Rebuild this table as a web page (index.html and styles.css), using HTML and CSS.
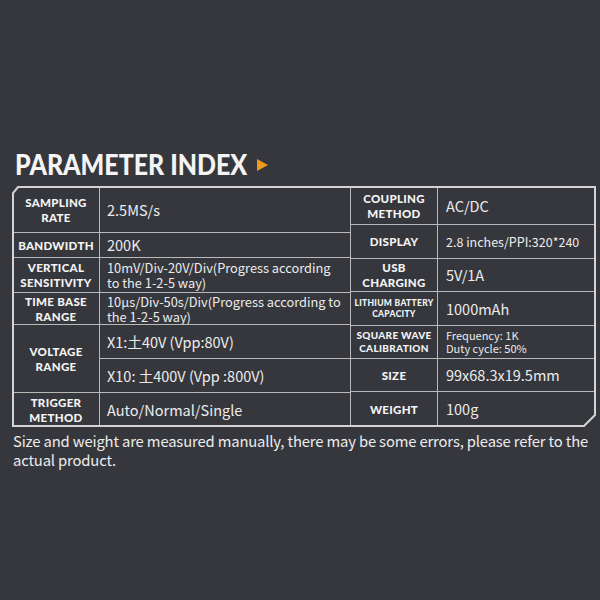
FILE: index.html
```html
<!DOCTYPE html>
<html>
<head>
<meta charset="utf-8">
<link rel="stylesheet" href="styles.css">
</head>
<body>
<div class="page">
  <div class="title-row">
    <h1 class="title">PARAMETER INDEX</h1>
    <span class="arrow"></span>
  </div>
  <div class="frame">
    <svg class="frame-line" width="584" height="241" viewBox="0 0 584 241">
      <polygon points="6,1 583,1 583,229 572,240 1,240 1,7" fill="none" stroke="#d4d4d4" stroke-width="2"/>
    </svg>
    <div class="half left">
      <div class="lbl r1">SAMPLING<br>RATE</div>
      <div class="val r1">2.5MS/s</div>
      <div class="lbl r2">BANDWIDTH</div>
      <div class="val r2">200K</div>
      <div class="lbl r3">VERTICAL<br>SENSITIVITY</div>
      <div class="val r3 sm">10mV/Div-20V/Div(Progress according<br>to the 1-2-5 way)</div>
      <div class="lbl r4">TIME BASE<br>RANGE</div>
      <div class="val r4 sm">10μs/Div-50s/Div(Progress according to<br>the 1-2-5 way)</div>
      <div class="lbl r5 span2">VOLTAGE<br>RANGE</div>
      <div class="val r5">X1:土40V (Vpp:80V)</div>
      <div class="val r6">X10: 土400V (Vpp :800V)</div>
      <div class="lbl r7">TRIGGER<br>METHOD</div>
      <div class="val r7">Auto/Normal/Single</div>
    </div>
    <div class="half right">
      <div class="lbl r1">COUPLING<br>METHOD</div>
      <div class="val r1">AC/DC</div>
      <div class="lbl r2">DISPLAY</div>
      <div class="val r2 sm2">2.8 inches/PPI:320*240</div>
      <div class="lbl r3">USB<br>CHARGING</div>
      <div class="val r3">5V/1A</div>
      <div class="lbl r4 xs">LITHIUM BATTERY<br>CAPACITY</div>
      <div class="val r4">1000mAh</div>
      <div class="lbl r5 xs2">SQUARE WAVE<br>CALIBRATION</div>
      <div class="val r5 xsv"><span>Frequency: 1K</span><span>Duty cycle: 50%</span></div>
      <div class="lbl r6">SIZE</div>
      <div class="val r6">99x68.3x19.5mm</div>
      <div class="lbl r7">WEIGHT</div>
      <div class="val r7">100g</div>
    </div>
  </div>
  <p class="note">Size and weight are measured manually, there may be some errors, please refer to the actual product.</p>
</div>
</body>
</html>
```
FILE: styles.css
```css
html, body {
  margin: 0;
  padding: 0;
  background: #36373c;
}
.page {
  width: 600px;
  height: 600px;
  padding-top: 146px;
  box-sizing: border-box;
  color: #f2f2f2;
}
.title-row {
  display: flex;
  align-items: center;
  height: 36px;
  margin: 0 0 4px 15px;
}
.title {
  margin: 0;
  width: 233px;
  white-space: nowrap;
  font-family: "Lato", "Open Sans", sans-serif;
  font-weight: 900;
  font-size: 29px;
  line-height: 34px;
  color: #f4f4f4;
  transform: scaleX(0.86);
  transform-origin: left center;
}
.arrow {
  width: 0;
  height: 0;
  border-left: 11px solid #f29a1c;
  border-top: 6px solid transparent;
  border-bottom: 6px solid transparent;
  margin-left: 9px;
  margin-top: 1px;
}
.frame {
  position: relative;
  margin-left: 12px;
  width: 584px;
  height: 241px;
  display: flex;
  padding: 1px;
  box-sizing: border-box;
}
.frame-line {
  position: absolute;
  left: 0;
  top: 0;
}
.half {
  display: grid;
}
.left {
  width: 337px;
  grid-template-columns: 86px 251px;
  grid-template-rows: 45px 25px 35px 32px 34px 34px 34px;
}
.right {
  width: 245px;
  grid-template-columns: 87px 158px;
  grid-template-rows: 37px 34px 33px 34px 33px 33px 35px;
}
.lbl, .val {
  border-top: 1px solid #b9b9b9;
  border-left: 1px solid #b9b9b9;
  display: flex;
  align-items: center;
  box-sizing: border-box;
}
.lbl {
  grid-column: 1;
  justify-content: center;
  text-align: center;
  font-family: "Lato", "Open Sans", sans-serif;
  font-weight: 900;
  font-size: 11.5px;
  line-height: 15px;
  letter-spacing: 0.3px;
  color: #f4f4f4;
}
.left .lbl { border-left: none; }
.val {
  grid-column: 2;
  padding-left: 7px;
  font-family: "Noto Sans CJK SC", "Noto Sans", sans-serif;
  font-size: 14.5px;
  line-height: 18px;
  color: #ececec;
}
.right .val { padding-left: 8px; }
.r1 { grid-row: 1; border-top: none; }
.r2 { grid-row: 2; }
.r3 { grid-row: 3; }
.r4 { grid-row: 4; }
.r5 { grid-row: 5; }
.r6 { grid-row: 6; }
.r7 { grid-row: 7; }
.span2 { grid-row: 5 / span 2; }
.val.sm {
  font-size: 12.8px;
  line-height: 15px;
  white-space: nowrap;
}
.val.sm2 {
  font-size: 12.5px;
}
.lbl.xs {
  font-size: 8.5px;
  line-height: 11px;
}
.lbl.xs2 {
  font-size: 10px;
  line-height: 13px;
}
.val.xsv {
  flex-direction: column;
  align-items: flex-start;
  justify-content: center;
  font-size: 11px;
  line-height: 13px;
}
.note {
  margin: 4px 0 0 13px;
  width: 590px;
  font-family: "Noto Sans CJK SC", "Noto Sans", sans-serif;
  font-size: 14.8px;
  letter-spacing: -0.15px;
  line-height: 19px;
  color: #ececec;
}
```
